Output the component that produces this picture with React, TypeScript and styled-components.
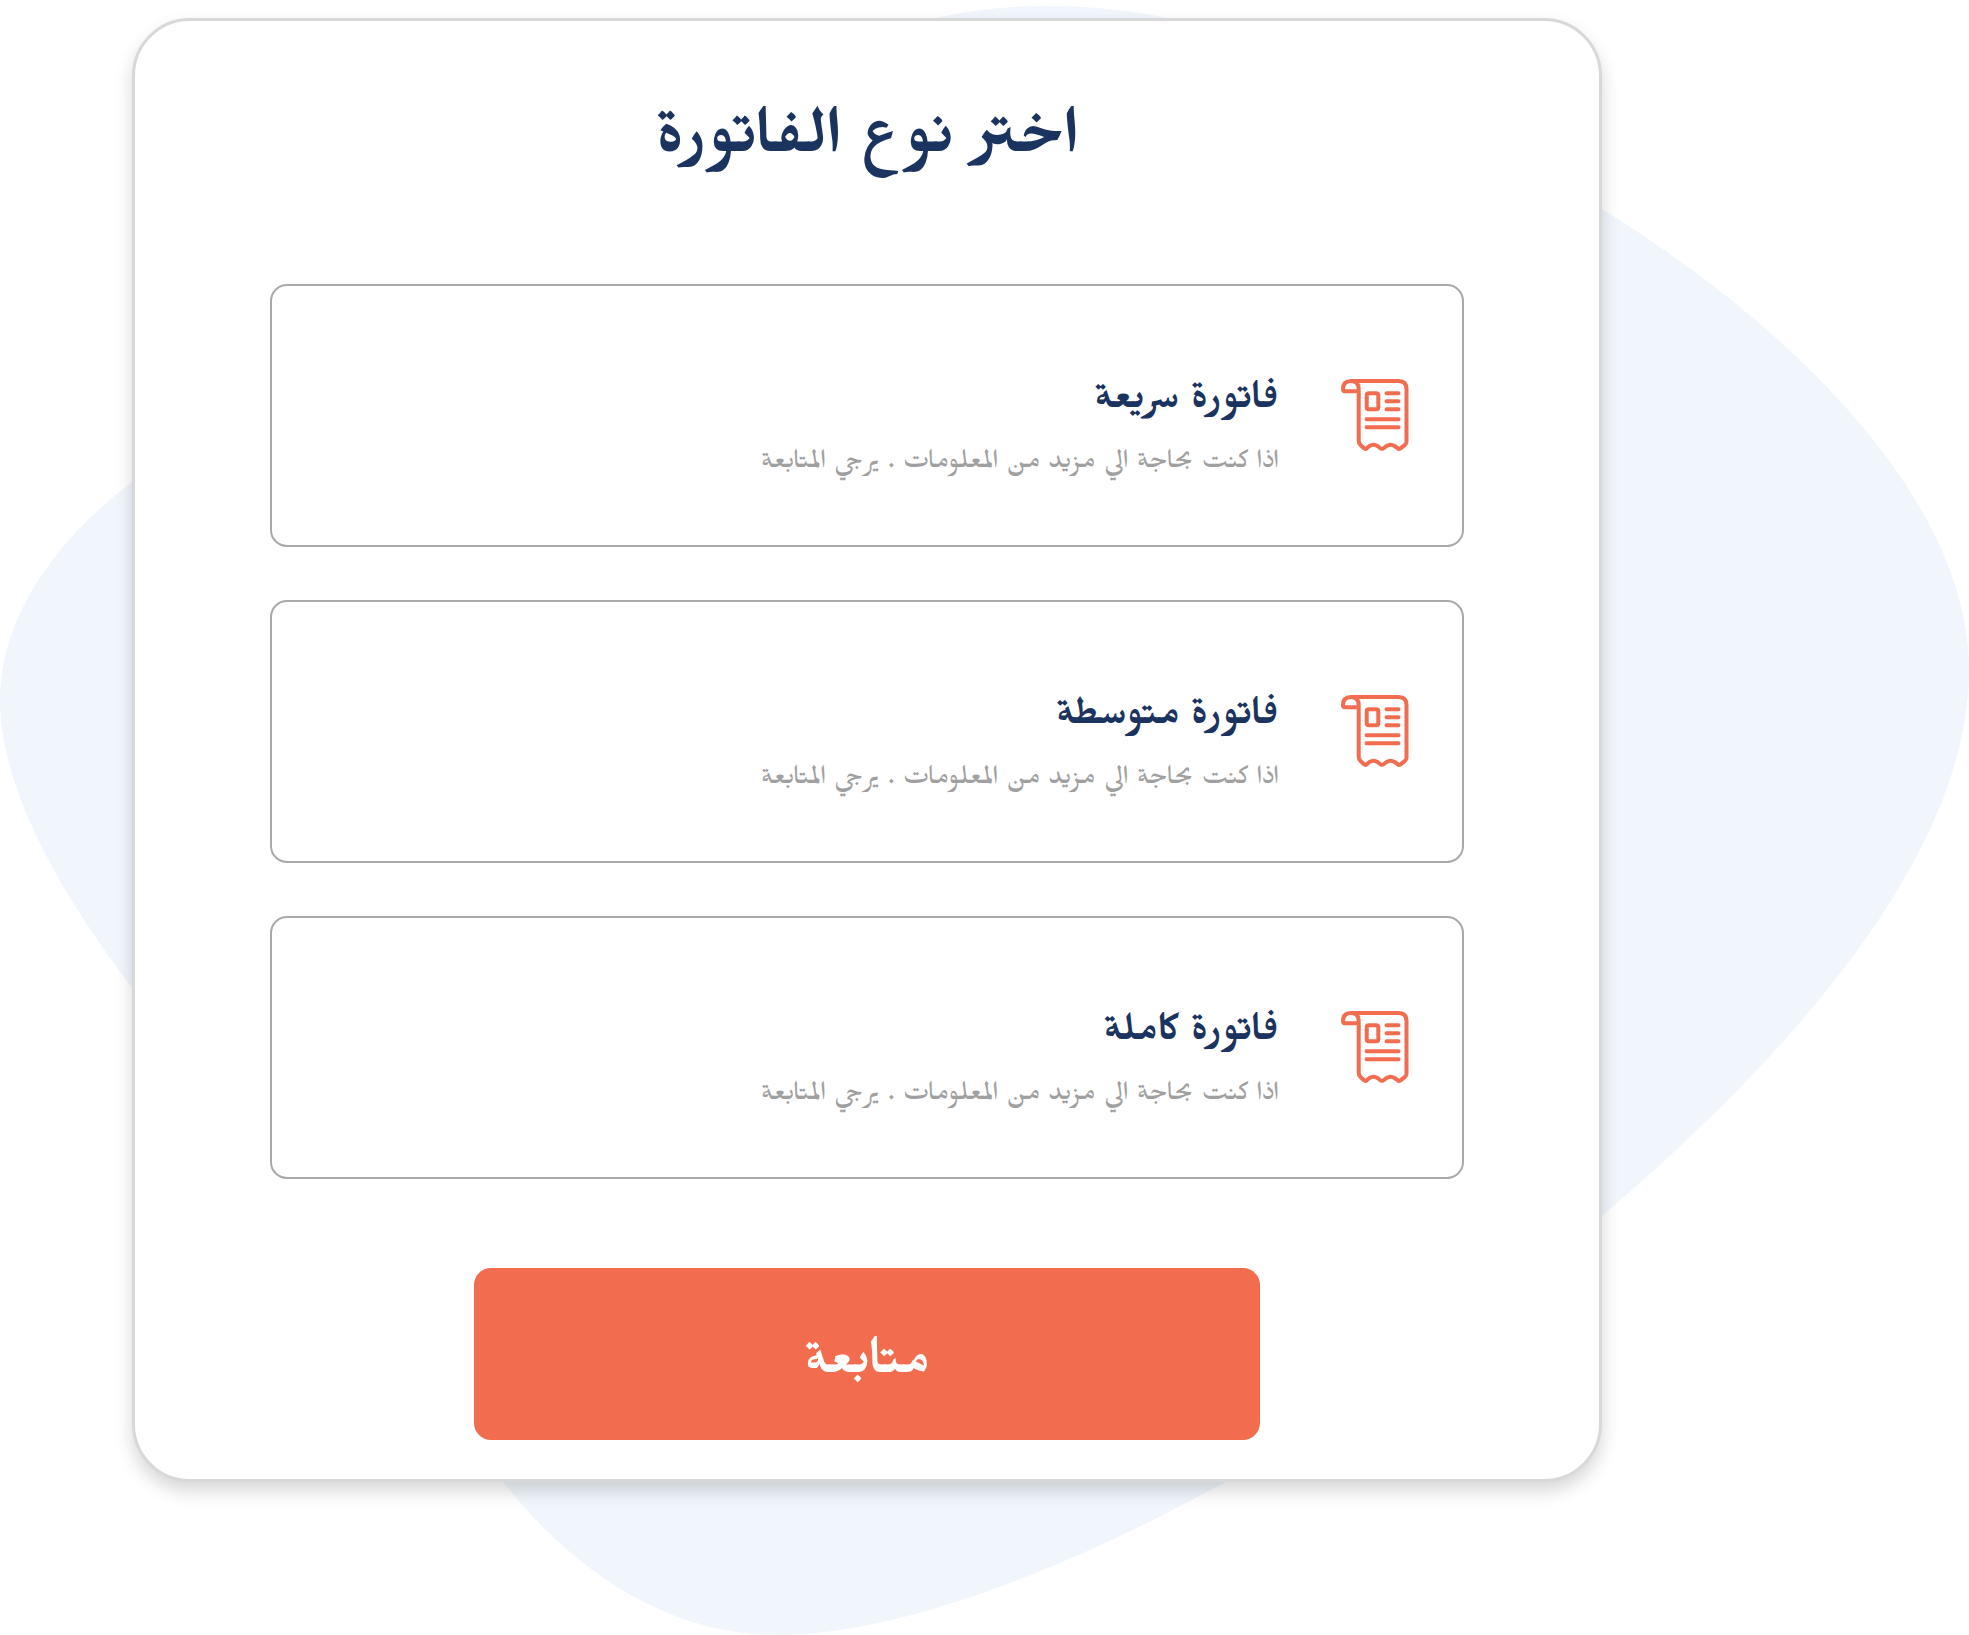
import React, { useState } from 'react';
import styled, { createGlobalStyle } from 'styled-components';

const colors = {
  navy: '#1b335f',
  coral: '#f26c4f',
  muted: '#a0a0a0',
  outline: '#a9a9a9',
  cardEdge: '#d8d8d8',
  blob: '#f0f6fc',
};

const GlobalStyle = createGlobalStyle`
  *, *::before, *::after { box-sizing: border-box; }
  body {
    margin: 0;
    background: #ffffff;
    font-family: Mirza, FreeSerif, "DejaVu Sans", serif;
  }
`;

const Page = styled.div`
  position: relative;
  min-height: 100vh;
  padding: 18px 18.64% 153px 132px;
  overflow: hidden;
`;

const Backdrop = styled.svg`
  position: absolute;
  inset: 0;
  width: 100%;
  height: 100%;
`;

const Card = styled.main`
  position: relative;
  display: flex;
  flex-direction: column;
  align-items: center;
  padding: 76px 9.2% 39px;
  background: #ffffff;
  border: 3px solid ${colors.cardEdge};
  border-radius: 58px;
  box-shadow: 0 9px 18px rgba(0, 0, 0, 0.16);
`;

const Title = styled.h1`
  margin: 0 0 87px;
  color: ${colors.navy};
  font-size: 76px;
  font-weight: 600;
  line-height: 100px;
`;

const OptionList = styled.div`
  display: flex;
  flex-direction: column;
  gap: 53px;
  width: 100%;
`;

const Option = styled.button`
  display: flex;
  align-items: center;
  gap: 62px;
  width: 100%;
  min-height: 263px;
  padding: 0 53px;
  background: #ffffff;
  border: 2px solid ${colors.outline};
  border-radius: 17px;
  font-family: inherit;
  text-align: start;
  cursor: pointer;
`;

const OptionText = styled.span`
  display: flex;
  flex-direction: column;
  gap: 4px;
  padding-top: 34px;
`;

const OptionName = styled.span`
  color: ${colors.navy};
  font-size: 46px;
  font-weight: 600;
  line-height: 60px;
`;

const OptionHint = styled.span`
  color: ${colors.muted};
  font-size: 32px;
  font-weight: 400;
  line-height: 52px;
`;

const Icon = styled.svg`
  flex: none;
  width: 68px;
  height: 73px;
`;

const Continue = styled.button`
  width: 65.8%;
  min-height: 172px;
  margin-top: 89px;
  padding: 30px 0 0;
  background: ${colors.coral};
  border: 0;
  border-radius: 17px;
  color: #ffffff;
  font-family: inherit;
  font-size: 60px;
  font-weight: 600;
  line-height: 80px;
  cursor: pointer;
`;

const InvoiceIcon = () => (
  <Icon
    viewBox="0 0 68 73"
    fill="none"
    stroke={colors.coral}
    strokeWidth="4"
    strokeLinecap="round"
    strokeLinejoin="round"
    aria-hidden="true"
  >
    <path d="M10 2H57.500Q65.500 2 65.500 10V62.500Q65.500 64.500 64 65.800L59.500 69.300Q58 70.500 56.500 69L53.500 67Q49.500 64.600 45.500 67L43 69Q41 70.500 39 69L36.500 67Q32.500 64.600 28.500 67L26 69Q24.500 70.500 23 69.300L19.500 66Q17.700 64 17.700 62V10Q17.700 2 10 2Q2 2 2 10Q2 12.300 4 12.300H17.700" />
    <rect x="25.700" y="14.300" width="11.600" height="16" rx="2" />
    <path d="M45.500 14.200H57.500M45.500 22.200H57.500M45.500 30.200H57.500M25.500 40.200H57.500M25.500 48.200H57.500" />
  </Icon>
);

const hint = 'اذا كنت بحاجة الي مزيد من المعلومات . يرجي المتابعة';

const invoiceTypes = [
  { id: 'quick', name: 'فاتورة سريعة' },
  { id: 'medium', name: 'فاتورة متوسطة' },
  { id: 'full', name: 'فاتورة كاملة' },
];

export default function App() {
  const [selected, setSelected] = useState<string | null>(null);

  return (
    <Page>
      <GlobalStyle />
      <Backdrop viewBox="0 0 1969 1635" preserveAspectRatio="none" aria-hidden="true">
        <path
          fill={colors.blob}
          d="M1045 6C1090 6 1130 10 1168 18C1320 50 1470 124 1602 209C1802 333 1969 505 1969 670C1969 850 1800 1047 1602 1216C1500 1303 1370 1400 1225 1482C1070 1568 900 1635 777 1635C660 1635 565 1561 503 1482C400 1350 240 1150 132 988C62 895 0 790 0 700C0 618 55 540 132 482C330 330 700 80 935 18C970 10 1005 6 1045 6Z"
        />
      </Backdrop>
      <Card dir="rtl" lang="ar">
        <Title>اختر نوع الفاتورة</Title>
        <OptionList>
          {invoiceTypes.map(({ id, name }) => (
            <Option
              key={id}
              type="button"
              aria-pressed={selected === id}
              onClick={() => setSelected(id)}
            >
              <InvoiceIcon />
              <OptionText>
                <OptionName>{name}</OptionName>
                <OptionHint>{hint}</OptionHint>
              </OptionText>
            </Option>
          ))}
        </OptionList>
        <Continue type="button">متابعة</Continue>
      </Card>
    </Page>
  );
}
